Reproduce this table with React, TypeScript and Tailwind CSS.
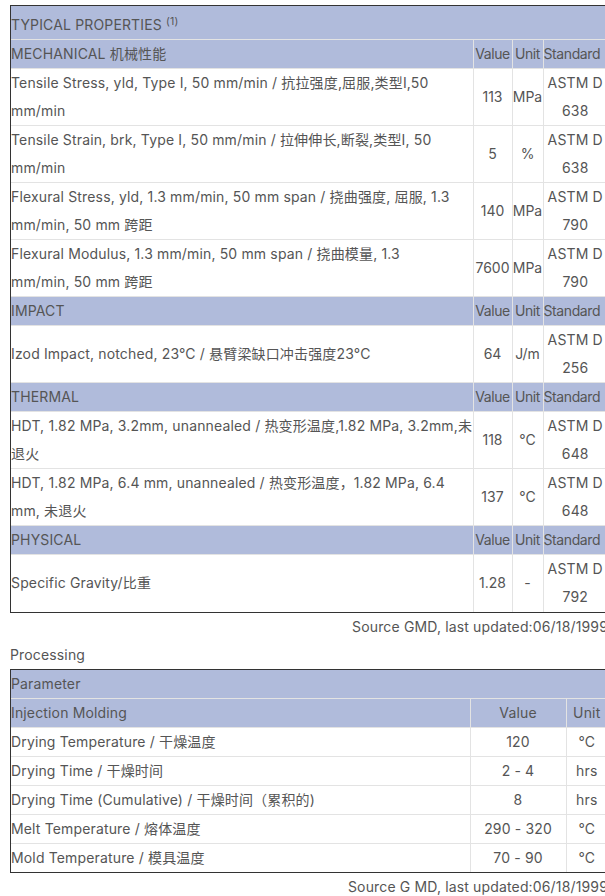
import React from 'react';

const FONT = "font-['Inter','Noto_Sans_CJK_SC',sans-serif]";

interface PropRow {
  label: React.ReactNode;
  value: string;
  unit: string;
  standard: string;
}

interface Section {
  title: string;
  rows: PropRow[];
}

const sections: Section[] = [
  {
    title: 'MECHANICAL 机械性能',
    rows: [
      {
        label: (
          <>
            Tensile Stress, yld, Type I, 50 mm/min / 抗拉强度,屈服,类型I,50
            <br />
            mm/min
          </>
        ),
        value: '113',
        unit: 'MPa',
        standard: 'ASTM D 638',
      },
      {
        label: (
          <>
            Tensile Strain, brk, Type I, 50 mm/min / 拉伸伸长,断裂,类型I, 50
            <br />
            mm/min
          </>
        ),
        value: '5',
        unit: '%',
        standard: 'ASTM D 638',
      },
      {
        label: (
          <>
            Flexural Stress, yld, 1.3 mm/min, 50 mm span / 挠曲强度, 屈服, 1.3
            <br />
            mm/min, 50 mm 跨距
          </>
        ),
        value: '140',
        unit: 'MPa',
        standard: 'ASTM D 790',
      },
      {
        label: (
          <>
            Flexural Modulus, 1.3 mm/min, 50 mm span / 挠曲模量, 1.3
            <br />
            mm/min, 50 mm 跨距
          </>
        ),
        value: '7600',
        unit: 'MPa',
        standard: 'ASTM D 790',
      },
    ],
  },
  {
    title: 'IMPACT',
    rows: [
      {
        label: 'Izod Impact, notched, 23°C / 悬臂梁缺口冲击强度23°C',
        value: '64',
        unit: 'J/m',
        standard: 'ASTM D 256',
      },
    ],
  },
  {
    title: 'THERMAL',
    rows: [
      {
        label: (
          <>
            HDT, 1.82 MPa, 3.2mm, unannealed / 热变形温度,1.82 MPa, 3.2mm,未
            <br />
            退火
          </>
        ),
        value: '118',
        unit: '°C',
        standard: 'ASTM D 648',
      },
      {
        label: (
          <>
            HDT, 1.82 MPa, 6.4 mm, unannealed / 热变形温度，1.82 MPa, 6.4
            <br />
            mm, 未退火
          </>
        ),
        value: '137',
        unit: '°C',
        standard: 'ASTM D 648',
      },
    ],
  },
  {
    title: 'PHYSICAL',
    rows: [
      {
        label: 'Specific Gravity/比重',
        value: '1.28',
        unit: '-',
        standard: 'ASTM D 792',
      },
    ],
  },
];

const processing = [
  { label: 'Drying Temperature / 干燥温度', value: '120', unit: '°C' },
  { label: 'Drying Time / 干燥时间', value: '2 - 4', unit: 'hrs' },
  { label: 'Drying Time (Cumulative) / 干燥时间（累积的)', value: '8', unit: 'hrs' },
  { label: 'Melt Temperature / 熔体温度', value: '290 - 320', unit: '°C' },
  { label: 'Mold Temperature / 模具温度', value: '70 - 90', unit: '°C' },
];

const cell = 'border border-[#e3e3e3] p-0 align-middle font-normal';
const head = 'bg-[#b0bbdb]';

export default function App() {
  return (
    <div className={`w-[605px] overflow-hidden bg-white text-[14px] leading-[28px] tracking-[0.15px] text-[#555] ${FONT}`}>
      <div className="ml-[10px] w-[598px] pt-[5px]">
        {/* Typical properties */}
        <div className="border border-[#333]">
          <table className="w-full table-fixed border-collapse border-hidden">
            <colgroup>
              <col className="w-[462px]" />
              <col className="w-[39px]" />
              <col className="w-[31px]" />
              <col />
            </colgroup>
            <tbody>
              <tr className={head}>
                <td colSpan={4} className={`${cell} pt-[5px] text-left`}>
                  TYPICAL PROPERTIES <sup>(1)</sup>
                </td>
              </tr>
              {sections.map((section) => (
                <React.Fragment key={section.title}>
                  <tr className={head}>
                    <td className={`${cell} text-left`}>{section.title}</td>
                    <td className={`${cell} text-center tracking-[-0.4px]`}>Value</td>
                    <td className={`${cell} text-center tracking-[-0.4px]`}>Unit</td>
                    <td className={`${cell} whitespace-nowrap text-left tracking-[-0.4px]`}>Standard</td>
                  </tr>
                  {section.rows.map((row, i) => (
                    <tr key={i}>
                      <td className={`${cell} h-[57px] whitespace-nowrap text-left`}>{row.label}</td>
                      <td className={`${cell} text-center tracking-normal`}>{row.value}</td>
                      <td className={`${cell} text-center tracking-normal`}>{row.unit}</td>
                      <td className={`${cell} text-center`}>{row.standard}</td>
                    </tr>
                  ))}
                </React.Fragment>
              ))}
            </tbody>
          </table>
        </div>
        <div className="text-right whitespace-nowrap">Source GMD, last updated:06/18/1999</div>

        {/* Processing */}
        <div>Processing</div>
        <div className="border border-[#333]">
          <table className="w-full table-fixed border-collapse border-hidden">
            <colgroup>
              <col className="w-[459px]" />
              <col className="w-[96px]" />
              <col />
            </colgroup>
            <tbody>
              <tr className={head}>
                <td colSpan={3} className={`${cell} text-left`}>Parameter</td>
              </tr>
              <tr className={head}>
                <td className={`${cell} text-left`}>Injection Molding</td>
                <td className={`${cell} text-center`}>Value</td>
                <td className={`${cell} text-center`}>Unit</td>
              </tr>
              {processing.map((row) => (
                <tr key={row.label}>
                  <td className={`${cell} text-left`}>{row.label}</td>
                  <td className={`${cell} text-center`}>{row.value}</td>
                  <td className={`${cell} text-center`}>{row.unit}</td>
                </tr>
              ))}
            </tbody>
          </table>
        </div>
        <div className="text-right whitespace-nowrap">Source G MD, last updated:06/18/1999</div>
      </div>
    </div>
  );
}
